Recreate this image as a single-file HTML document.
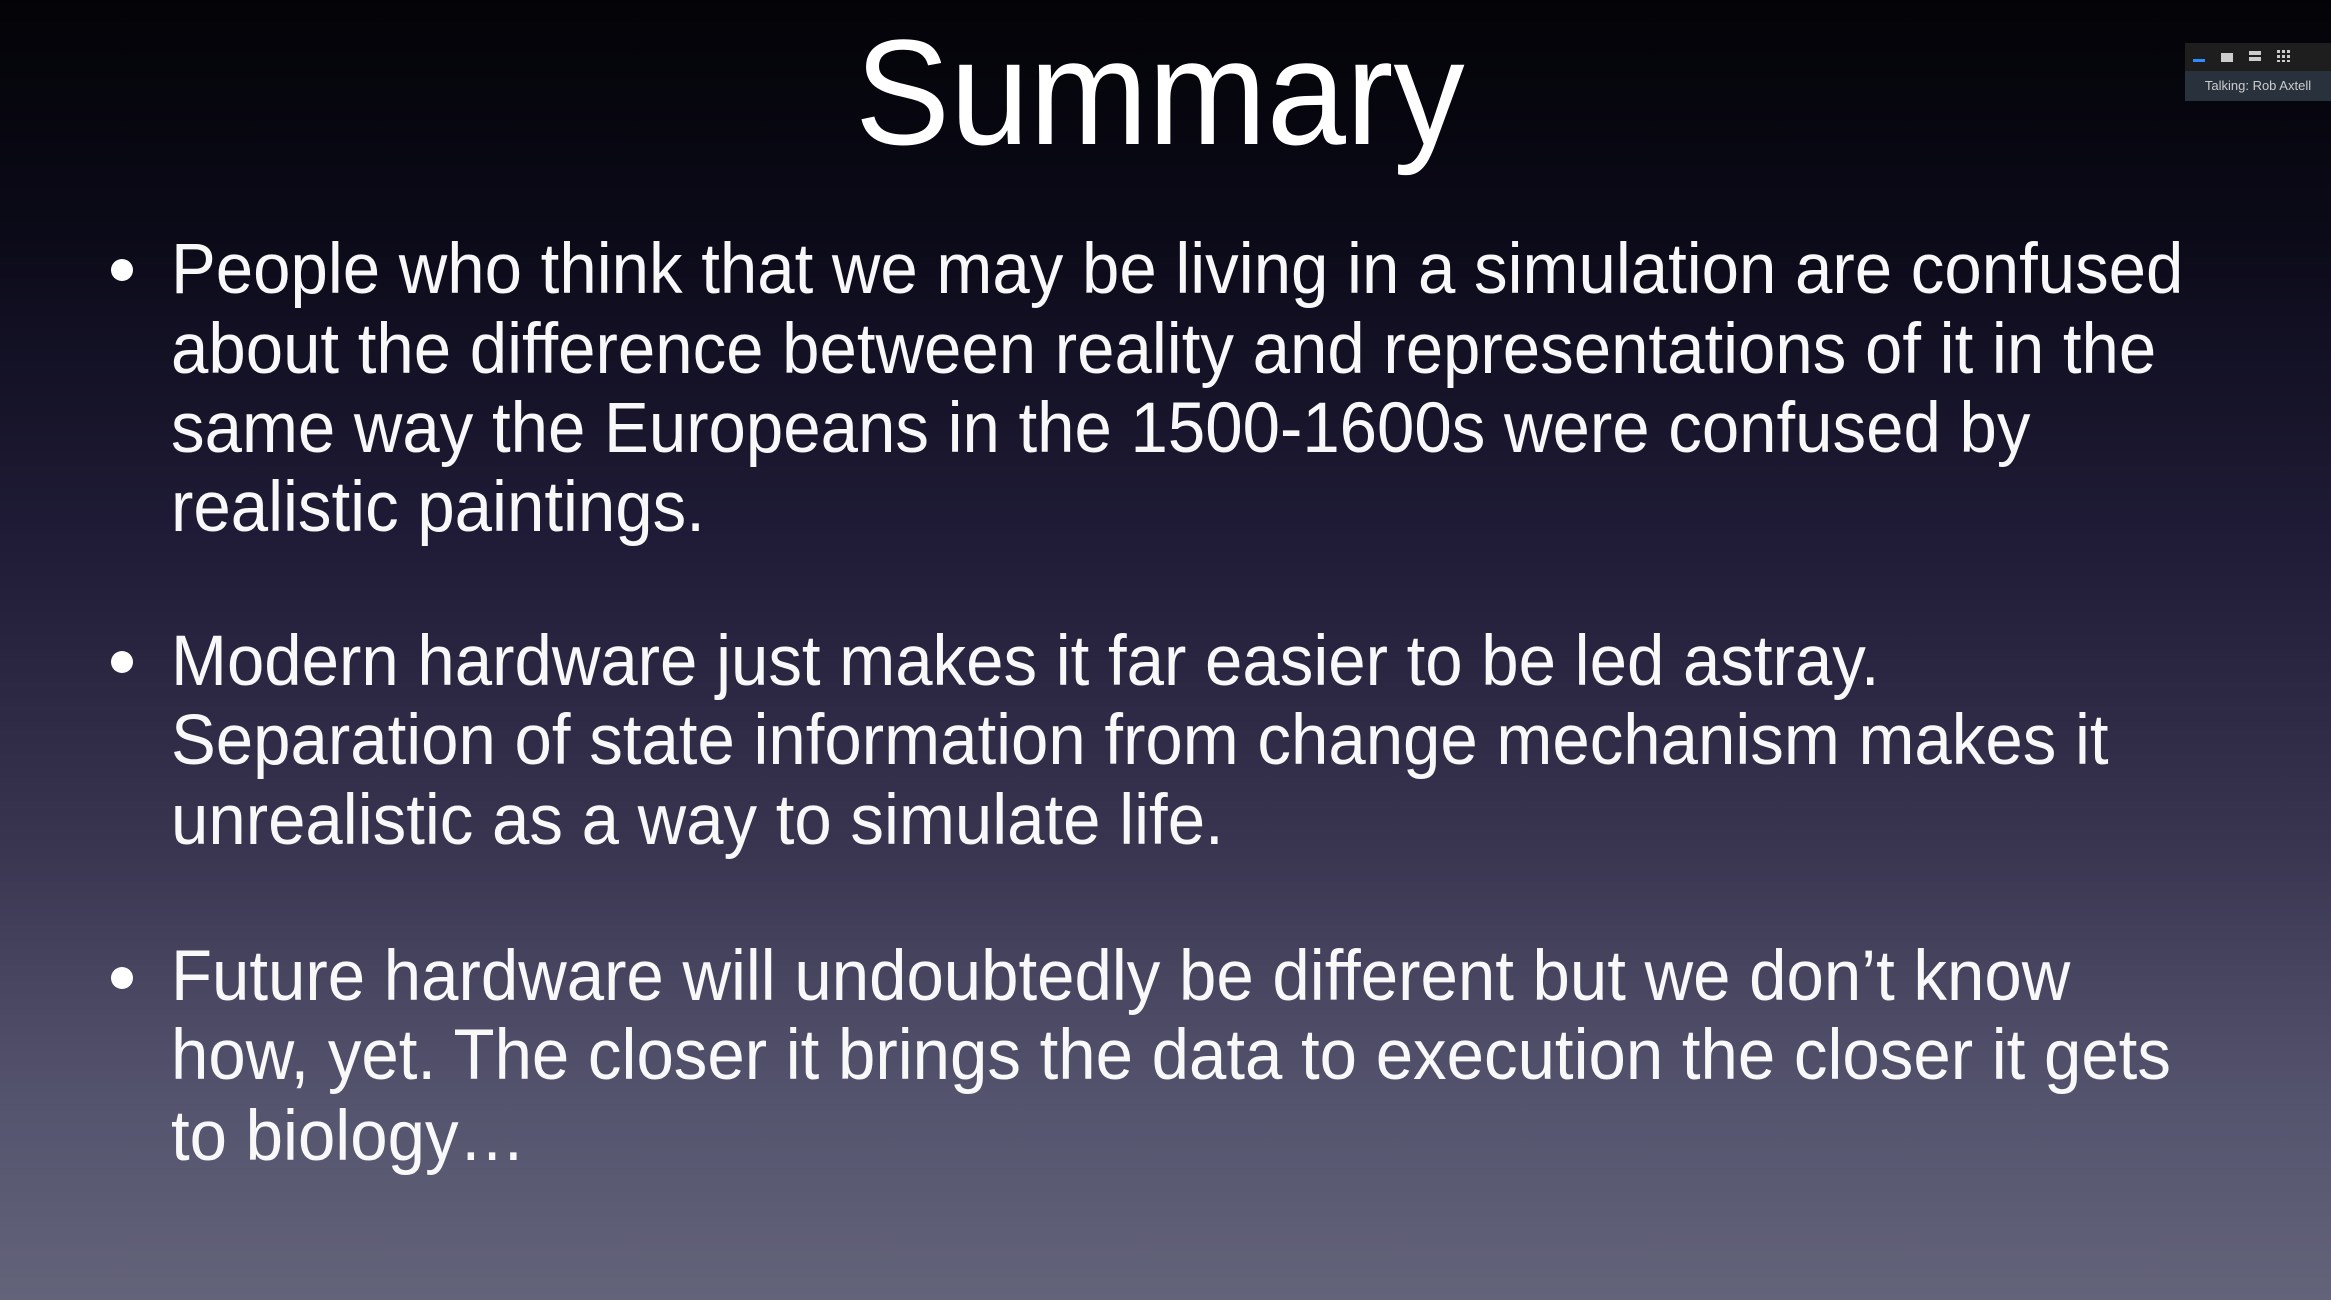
<!DOCTYPE html>
<html><head><meta charset="utf-8"><style>
html,body{margin:0;padding:0}
body{width:2331px;height:1300px;position:relative;overflow:hidden;
background:linear-gradient(to bottom,#030307 0%,#0b0a18 18%,#201c38 42%,#393550 65%,#55546e 85%,#63637a 100%);
font-family:"Liberation Sans",Arial,sans-serif;color:#fff}
.t{position:absolute;left:855px;top:17px;font-size:150px;line-height:1;white-space:nowrap;transform:scaleX(0.95);transform-origin:left}
.l{position:absolute;left:171px;font-size:71px;line-height:1;white-space:nowrap;transform:scaleX(0.946);transform-origin:left;color:#f8f8f8}
.b{position:absolute;left:111px;width:22px;height:22px;border-radius:50%;background:#fff}
.w{position:absolute;left:2185px;top:43px;width:146px;height:58px;background:#1e1e1f}
.w .r{position:absolute;left:0;top:28px;width:146px;height:30px;background:#29323c;color:#ccc;font-size:13px;line-height:30px;text-align:center}
</style></head><body>
<div class="t">Summary</div>
<div class="b" style="top:259px"></div>
<div class="l" style="top:234px">People who think that we may be living in a simulation are confused</div>
<div class="l" style="top:314px">about the difference between reality and representations of it in the</div>
<div class="l" style="top:393px">same way the Europeans in the 1500-1600s were confused by</div>
<div class="l" style="top:472px">realistic paintings.</div>
<div class="b" style="top:651px"></div>
<div class="l" style="top:626px">Modern hardware just makes it far easier to be led astray.</div>
<div class="l" style="top:705px">Separation of state information from change mechanism makes it</div>
<div class="l" style="top:785px">unrealistic as a way to simulate life.</div>
<div class="b" style="top:967px"></div>
<div class="l" style="top:941px">Future hardware will undoubtedly be different but we don’t know</div>
<div class="l" style="top:1020px">how, yet. The closer it brings the data to execution the closer it gets</div>
<div class="l" style="top:1101px">to biology…</div>
<div class="w">
<div style="position:absolute;left:8px;top:16px;width:12px;height:3px;background:#2d8cff"></div>
<div style="position:absolute;left:36px;top:10px;width:12px;height:9px;background:#ccc"></div>
<div style="position:absolute;left:64px;top:8px;width:12px;height:4px;background:#ccc"></div>
<div style="position:absolute;left:64px;top:14px;width:12px;height:4px;background:#ccc"></div>
<div style="position:absolute;left:92px;top:7px;width:14px;height:12px;background:repeating-linear-gradient(to right,#ccc 0 3px,transparent 3px 5px);-webkit-mask:repeating-linear-gradient(to bottom,#000 0 3px,transparent 3px 5px);mask:repeating-linear-gradient(to bottom,#000 0 3px,transparent 3px 5px)"></div>
<div class="r">Talking: Rob Axtell</div>
</div>
</body></html>
